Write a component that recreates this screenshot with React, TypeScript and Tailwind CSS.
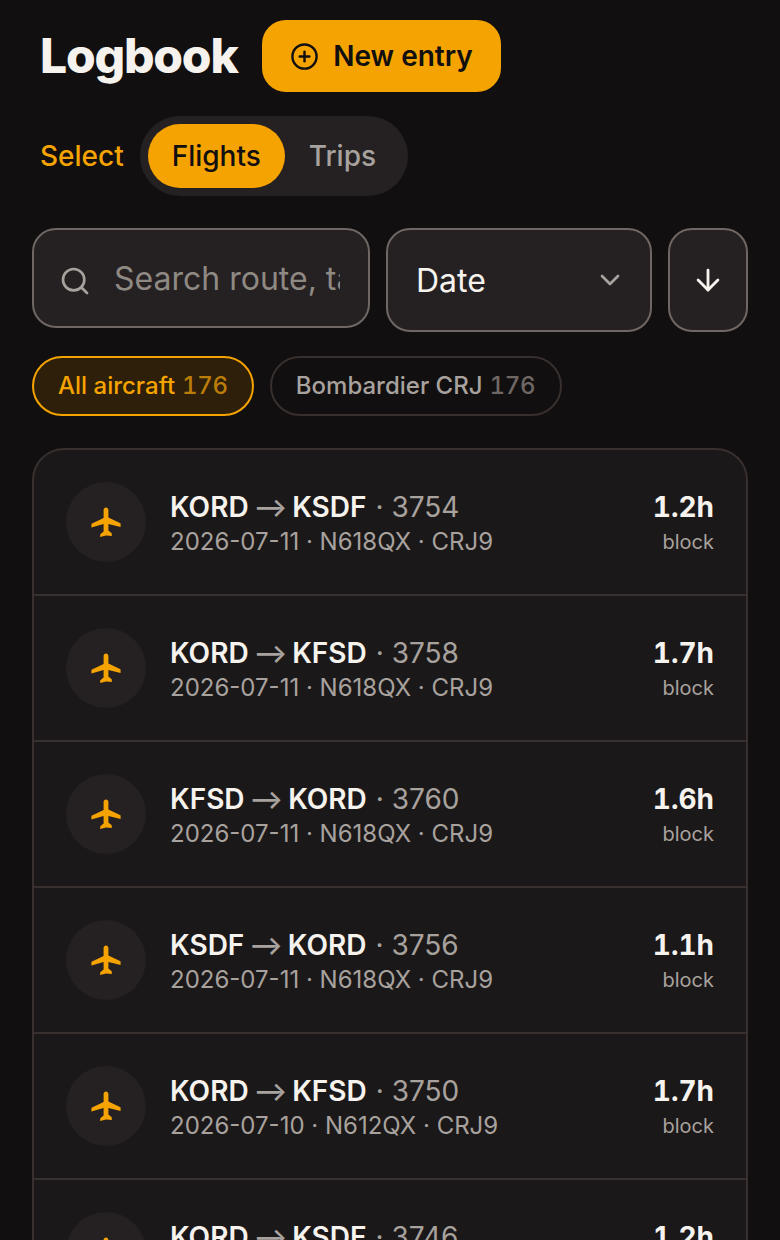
import { ArrowDown, ChevronDown, CirclePlus, Search } from 'lucide-react';

interface Flight {
    from: string;
    to: string;
    num: string;
    date: string;
    tail: string;
    hours: string;
}

const flights: Flight[] = [
    { from: 'KORD', to: 'KSDF', num: '3754', date: '2026-07-11', tail: 'N618QX', hours: '1.2h' },
    { from: 'KORD', to: 'KFSD', num: '3758', date: '2026-07-11', tail: 'N618QX', hours: '1.7h' },
    { from: 'KFSD', to: 'KORD', num: '3760', date: '2026-07-11', tail: 'N618QX', hours: '1.6h' },
    { from: 'KSDF', to: 'KORD', num: '3756', date: '2026-07-11', tail: 'N618QX', hours: '1.1h' },
    { from: 'KORD', to: 'KFSD', num: '3750', date: '2026-07-10', tail: 'N612QX', hours: '1.7h' },
    { from: 'KORD', to: 'KSDF', num: '3746', date: '2026-07-10', tail: 'N612QX', hours: '1.2h' },
];

function PlaneIcon() {
    return (
        <svg viewBox="0 0 30 30" className="w-[30px] h-[30px] text-[#f5a300]" fill="currentColor">
            <path d="M12.6 2.9c0-1.3 1-2.4 2.4-2.4s2.4 1.1 2.4 2.4v7.6l11.6 5.5c.4.2.6.5.6.9v3.2L17.4 17v6.6l3 2.4c.3.2.4.5.4.8v2.1L15 28.6l-5.8 1.3v-2.1c0-.3.1-.6.4-.8l3-2.4V17L.4 20.6v-3.2c0-.4.2-.7.6-.9l11.6-5.5z" />
        </svg>
    );
}

function FlightRow({ flight }: { flight: Flight }) {
    return (
        <div className="h-[146px] shrink-0 flex items-center px-8 border-b-2 border-[#38302f]">
            <div className="w-20 h-20 rounded-full bg-[#252022] flex items-center justify-center shrink-0">
                <PlaneIcon />
            </div>
            <div className="ml-6 pt-1 flex-1 min-w-0">
                <div className="flex items-center text-[28px] leading-[36px] text-[#a8a29e] whitespace-nowrap">
                    <span className="font-semibold text-[#f6f3ee]">{flight.from}</span>
                    <span className="mx-[5px] text-[25px] font-semibold text-[#a8a29e]">⟶</span>
                    <span className="font-semibold text-[#f6f3ee]">{flight.to}</span>
                    <span className="ml-[9px]">· {flight.num}</span>
                </div>
                <div className="text-[24px] leading-[34px] text-[#a8a29e] whitespace-nowrap">
                    {flight.date} · {flight.tail} · CRJ9
                </div>
            </div>
            <div className="pt-1 text-right">
                <div className="text-[28px] leading-[36px] font-bold tabular-nums text-[#f6f3ee]">{flight.hours}</div>
                <div className="text-[20px] leading-[34px] text-[#a8a29e]">block</div>
            </div>
        </div>
    );
}

export default function App() {
    return (
        <div className="w-[780px] h-[1240px] overflow-hidden bg-[#110f0f] font-['Inter',sans-serif]">
            <div className="pt-5 pl-10 flex items-center gap-6">
                <h1 className="w-[198px] text-[48px] leading-[72px] font-extrabold tracking-[-1.2px] whitespace-nowrap text-[#f6f3ee]">Logbook</h1>
                <button className="h-[72px] w-[239px] rounded-[24px] bg-[#f5a300] flex items-center justify-center gap-[14px] text-[28px] font-semibold text-[#110f0f]">
                    <CirclePlus className="w-[29px] h-[29px]" strokeWidth={2} />
                    New entry
                </button>
            </div>
            <div className="mt-6 pl-10 flex items-center gap-4">
                <span className="text-[28px] font-medium text-[#f5a300]">Select</span>
                <div className="h-20 w-[268px] rounded-full bg-[#252022] p-2 flex items-center">
                    <div className="h-16 w-[137px] rounded-full bg-[#f5a300] flex items-center justify-center text-[28px] font-medium text-[#110f0f]">
                        Flights
                    </div>
                    <div className="ml-6 text-[28px] font-medium text-[#a8a29e]">Trips</div>
                </div>
            </div>
            <div className="mt-8 mx-8 flex items-start gap-4">
                <div className="h-[100px] w-[338px] rounded-[24px] border-2 border-[#6f6764] bg-[#252022] flex items-center pl-[25px] pr-[28px]">
                    <Search className="mt-[5px] w-8 h-8 text-[#a8a29e] shrink-0" strokeWidth={2} />
                    <div className="ml-[23px] pt-[1px] overflow-hidden whitespace-nowrap text-[32px] text-[#8f8983]">Search route, tail</div>
                </div>
                <div className="h-[104px] w-[266px] rounded-[24px] border-2 border-[#6f6764] bg-[#252022] flex items-center justify-between pl-7 pr-6">
                    <span className="pt-[1px] text-[32px] text-[#f6f3ee]">Date</span>
                    <ChevronDown className="w-8 h-8 text-[#a8a29e]" strokeWidth={2} />
                </div>
                <div className="h-[104px] w-20 rounded-[24px] border-2 border-[#6f6764] bg-[#252022] flex items-center justify-center">
                    <ArrowDown className="w-[34px] h-[34px] text-[#f6f3ee]" strokeWidth={2} />
                </div>
            </div>
            <div className="mt-6 mx-8 flex gap-4">
                <div className="h-[60px] px-6 rounded-full border-2 border-[#f5a300] bg-[#2e1f0a] flex items-center text-[24px] font-medium text-[#f5a300] whitespace-nowrap">
                    All aircraft<span className="ml-[7px] tracking-[-0.3px] tabular-nums text-[#b97d08]">176</span>
                </div>
                <div className="h-[60px] pl-6 pr-[25px] rounded-full border-2 border-[#38302f] flex items-center text-[24px] font-medium text-[#a8a29e] whitespace-nowrap">
                    Bombardier CRJ<span className="ml-[7px] tracking-[-0.3px] tabular-nums text-[#6f6764]">176</span>
                </div>
            </div>
            <div className="mt-8 mx-8 rounded-t-[32px] border-2 border-b-0 border-[#38302f] bg-[#1b1819] flex flex-col overflow-hidden">
                {flights.map((flight) => (
                    <FlightRow key={flight.num} flight={flight} />
                ))}
            </div>
        </div>
    );
}
